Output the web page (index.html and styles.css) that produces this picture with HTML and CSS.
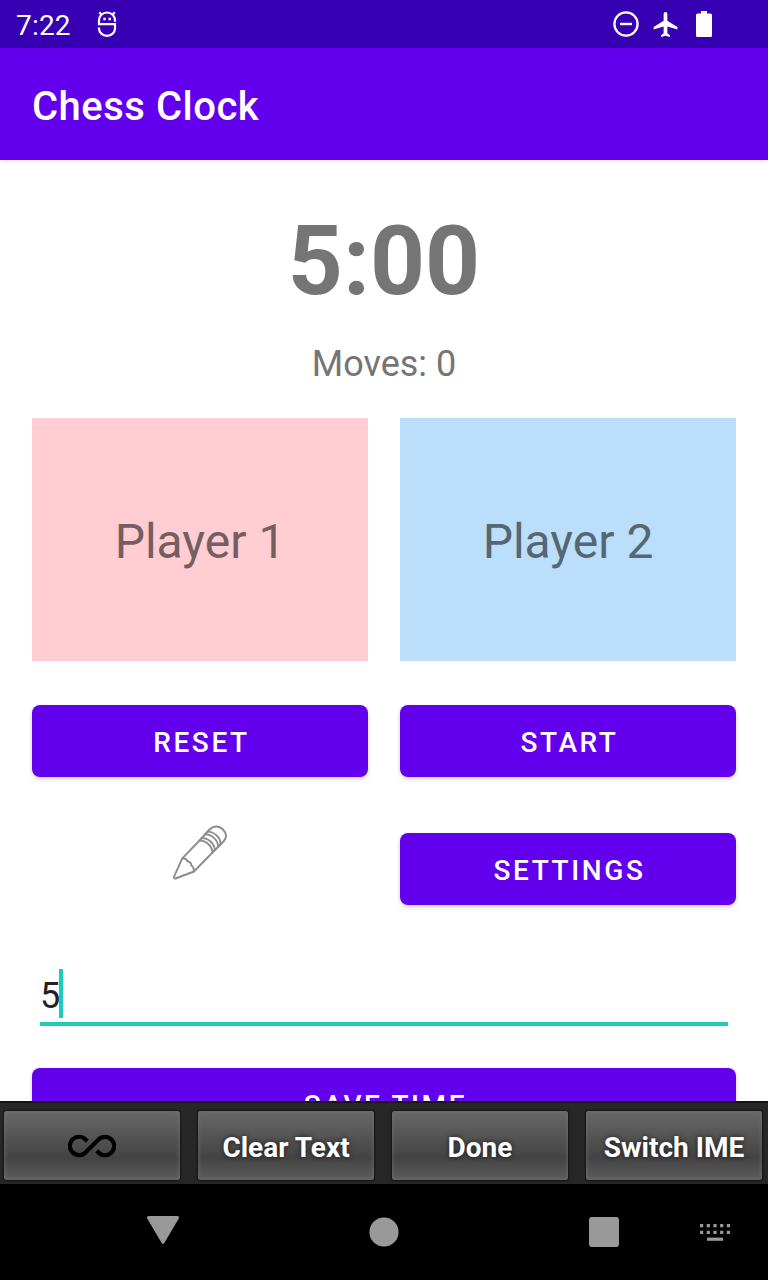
FILE: index.html
```html
<!DOCTYPE html>
<html lang="en">
<head>
<meta charset="utf-8">
<title>Chess Clock</title>
<link rel="stylesheet" href="styles.css">
</head>
<body>
<header class="status-bar">
  <span class="status-time">7:22</span>
  <svg class="debug-icon" width="20" height="26" viewBox="0 0 20 26" fill="none" stroke="#fff" stroke-width="2.200">
    <path d="M2 13.200V9.500a8 8 0 0 1 16 0v1.300M.9 13.200h18.200M2 16.500v1a8 7.300 0 0 0 16 0v-4.300M4.800 4.200 2.300 1.300M15.200 4.200l2.500-2.900"/>
    <path d="M6.300 8h2.400M11.500 8h2.400" stroke-width="2.300"/>
  </svg>
  <div class="status-icons">
    <svg width="26" height="26" viewBox="0 0 26 26" fill="none" stroke="#fff"><circle cx="13" cy="13" r="11.600" stroke-width="2.300"/><path d="M7 13h12" stroke-width="2.400"/></svg>
    <svg width="25" height="25" viewBox="2 2 20 20" fill="#fff"><path d="M21.500 16v-2l-8-5V3.500c0-.83-.67-1.500-1.500-1.500s-1.500.67-1.500 1.500V9l-8 5v2l8-2.500V19l-2 1.500V22l3.500-1 3.500 1v-1.500l-2-1.500v-5.500l8 2.500z"/></svg>
    <svg width="16" height="26" viewBox="0 0 16 26" fill="#fff"><path d="M5 0h6v2.500h3.500A1.500 1.500 0 0 1 16 4v20.500a1.500 1.500 0 0 1-1.500 1.500h-13A1.500 1.500 0 0 1 0 24.500V4a1.500 1.500 0 0 1 1.500-1.500H5z"/></svg>
  </div>
</header>
<div class="app-bar"><h1 class="app-title">Chess Clock</h1></div>
<main class="content">
  <div class="clock">5:00</div>
  <div class="moves">Moves: 0</div>
  <div class="players">
    <div class="player player-one">Player 1</div>
    <div class="player player-two">Player 2</div>
  </div>
  <div class="actions">
    <button class="button">RESET</button>
    <button class="button">START</button>
    <div class="edit">
      <svg width="56" height="56" viewBox="0 0 56 56" fill="none" stroke="#8c8c8c" stroke-width="1.900" stroke-linejoin="round" stroke-linecap="round">
        <path d="M10.300 33.300 27.500 15.500 37 5C41.500.3 47 .5 51 4.500s4 8 .5 12L40.500 27.500 22 46.500 3.500 53.500a1.300 1.300 0 0 1-1.600-1.600z"/>
        <path d="M10.300 33.300c3 0 4.500.5 5 3 2.500.5 4 1.500 4 4 2.500 1.500 2.700 3.500 2.700 6"/>
        <path d="M27.500 15.500c6.500 0 12.500 5.500 13 12M29.800 13c6.500 0 12.500 5.500 13 12M33.200 9.300c6.500 0 12.500 5.500 13 12M35.600 6.600c6.500 0 12.500 5.500 13 12"/>
      </svg>
    </div>
    <button class="button">SETTINGS</button>
  </div>
  <div class="time-field"><span>5</span><i class="caret"></i></div>
  <button class="button save">SAVE TIME</button>
</main>
<div class="ime-bar">
  <button class="key">
    <svg width="48" height="24" viewBox="0 0 48 24" fill="none" stroke="#000" stroke-width="4.200"><path d="M19.300 7.100 17.800 5.700A9.200 9.200 0 1 0 17.500 18.500L30.500 5.500A9.200 9.200 0 1 1 30.200 18.300L28.700 16.900"/></svg>
  </button>
  <button class="key">Clear Text</button>
  <button class="key">Done</button>
  <button class="key">Switch IME</button>
</div>
<nav class="nav-bar">
  <svg class="nav-back" width="32" height="28" viewBox="0 0 32 28" fill="#999"><path d="M1.500 0h29Q33 .5 31.500 3L17.300 27q-1.300 2-2.600 0L.5 3Q-1 .5 1.500 0z"/></svg>
  <svg class="nav-home" width="30" height="30" viewBox="0 0 30 30"><circle cx="15" cy="15" r="14.600" fill="#999"/></svg>
  <svg class="nav-recents" width="30" height="30" viewBox="0 0 30 30"><rect width="30" height="30" rx="3" fill="#999"/></svg>
  <svg class="nav-keyboard" width="30" height="17" viewBox="0 0 30 17" stroke="#999" stroke-width="3.200" fill="none"><path d="M0 1.700h30M0 8.400h30" stroke-dasharray="3.200 3.500"/><path d="M7 15.200h16"/></svg>
</nav>
</body>
</html>
```
FILE: styles.css
```css
* {
  box-sizing: border-box;
}

body {
  margin: 0;
  width: 768px;
  height: 1280px;
  overflow: hidden;
  display: flex;
  flex-direction: column;
  background: #fff;
  font-family: Roboto, sans-serif;
}

svg {
  display: block;
  flex: none;
}

button {
  border: 0;
  padding: 0;
  font-family: inherit;
}

.status-bar {
  flex: none;
  height: 48px;
  padding: 2px 56px 0 16px;
  display: flex;
  align-items: center;
  background: #3700b3;
  color: #fff;
}

.status-time {
  width: 81px;
  font-size: 28px;
  letter-spacing: 0.2px;
  line-height: 33px;
}

.debug-icon {
  margin-top: -2px;
}

.status-icons {
  display: flex;
  gap: 14px;
  align-items: center;
  margin: -2px 0 0 auto;
}

.status-icons svg:last-child {
  margin-left: 4px;
}

.app-bar {
  flex: none;
  height: 112px;
  padding: 4px 32px 0;
  display: flex;
  align-items: center;
  background: #6200ee;
  box-shadow: 0 1px 5px rgba(0, 0, 0, 0.12);
}

.app-title {
  margin: 0;
  color: #fff;
  font-size: 40px;
  font-weight: 500;
  letter-spacing: 0.5px;
}

.content {
  flex: 1;
  min-height: 0;
  overflow: hidden;
  padding: 45px 32px 0;
  color: #757575;
  display: flex;
  flex-direction: column;
}

.clock {
  flex: none;
  font-size: 96px;
  font-weight: 700;
  line-height: 112px;
  text-align: center;
}

.moves {
  flex: none;
  margin-top: 26px;
  font-size: 36px;
  line-height: 42px;
  text-align: center;
}

.players,
.actions {
  flex: none;
  display: grid;
  grid-template-columns: 1fr 1fr;
  column-gap: 32px;
}

.players {
  margin-top: 33px;
}

.player {
  height: 243px;
  padding-top: 4px;
  display: flex;
  align-items: center;
  justify-content: center;
  font-size: 48px;
}

.player-one {
  background: #ffcdd2;
  color: #755e61;
}

.player-two {
  background: #bbdefb;
  color: #566673;
}

.actions {
  margin-top: 44px;
  row-gap: 56px;
}

.button {
  height: 72px;
  padding: 2px 0 0 3px;
  border-radius: 8px;
  background: #6200ee;
  box-shadow: 0 2px 4px rgba(0, 0, 0, 0.2);
  color: #fff;
  font-size: 28px;
  font-weight: 500;
  letter-spacing: 2.6px;
}

.edit {
  height: 72px;
  display: flex;
  justify-content: center;
}

.edit svg {
  margin-top: -8px;
}

.time-field {
  flex: none;
  margin: 64px 8px 0;
  height: 57px;
  border-bottom: 4px solid #1bccbb;
  display: flex;
  align-items: flex-start;
  color: #212121;
  font-size: 36px;
  line-height: 54px;
}

.caret {
  width: 4px;
  height: 49px;
  margin-left: -1px;
  background: #1bccbb;
}

.save {
  flex: none;
  margin-top: 42px;
}

.ime-bar {
  flex: none;
  height: 83px;
  padding: 8px 4px 4px;
  display: grid;
  grid-template-columns: repeat(4, 176px);
  column-gap: 18px;
  align-content: center;
  border-top: 2px solid #141414;
  background: #272727;
}

.key {
  height: 69px;
  display: flex;
  align-items: center;
  justify-content: center;
  padding-top: 3px;
  border-radius: 3px;
  background: linear-gradient(#686868, #434343 68%, #5d5d5d);
  box-shadow: 0 0 2px 1px #151515, inset 0 0 4px #707070;
  color: #fff;
  font-size: 28px;
  font-weight: 700;
  text-shadow: 0 0 5px rgba(0, 0, 0, 0.7);
}

.key svg {
  margin-top: -2px;
}

.nav-bar {
  flex: none;
  height: 96px;
  display: flex;
  align-items: center;
  background: #000;
}

.nav-back {
  margin: -4px 0 0 147px;
}

.nav-home {
  margin-left: 190px;
}

.nav-recents {
  margin-left: 190px;
}

.nav-keyboard {
  margin-left: 81px;
}
```
